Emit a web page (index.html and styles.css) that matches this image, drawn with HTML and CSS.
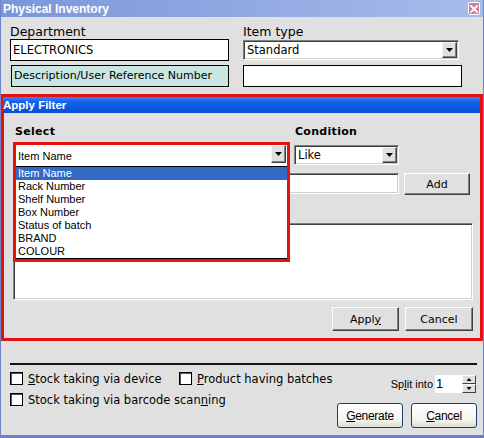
FILE: index.html
```html
<!DOCTYPE html>
<html>
<head>
<meta charset="utf-8">
<title>Physical Inventory</title>
<link rel="stylesheet" href="styles.css">
</head>
<body>
<div class="window">
  <div class="titlebar">
    <span class="title">Physical Inventory</span>
    <span class="close"><svg width="8" height="8" viewBox="0 0 8 8"><path d="M1 1L7 7M7 1L1 7" stroke="#fff" stroke-width="1.8" stroke-linecap="square"/></svg></span>
  </div>

  <div class="top">
    <div class="col">
      <div class="label">Department</div>
      <div class="textbox dept">ELECTRONICS</div>
      <div class="textbox desc">Description/User Reference Number</div>
    </div>
    <div class="col">
      <div class="label">Item type</div>
      <div class="combo sunken itemtype"><span class="val">Standard</span><span class="arrow"></span></div>
      <div class="textbox empty"></div>
    </div>
  </div>

  <div class="filter">
    <div class="ftitle">Apply Filter</div>
    <div class="fbody">
      <div class="fgrid flabels">
        <span class="sel-label">Select</span>
        <span class="cond-label">Condition</span>
      </div>
      <div class="fgrid fcombos">
        <div class="combo-wrap">
          <div class="combo selcombo"><span class="val">Item Name</span><span class="arrow"></span></div>
          <ul class="list">
            <li class="picked">Item Name</li>
            <li>Rack Number</li>
            <li>Shelf Number</li>
            <li>Box Number</li>
            <li>Status of batch</li>
            <li>BRAND</li>
            <li>COLOUR</li>
          </ul>
          <div class="hl"></div>
        </div>
        <div class="combo sunken condcombo"><span class="val">Like</span><span class="arrow"></span></div>
      </div>
      <div class="valrow">
        <div class="valbox"></div>
        <button class="btn add">Add</button>
      </div>
      <div class="textarea"></div>
      <div class="actions">
        <button class="btn apply">Appl<u>y</u></button>
        <button class="btn cancel">Cancel</button>
      </div>
    </div>
  </div>

  <div class="bottom">
    <div class="sep"></div>
    <div class="bgrid">
      <div class="bleft">
        <div class="chkrow">
          <span class="item1"><span class="chk"></span><span><u>S</u>tock taking via device</span></span>
          <span class="chk"></span><span><u>P</u>roduct having batches</span>
        </div>
        <div class="chkrow">
          <span class="chk"></span><span>Stock taking via barcode scan<u>n</u>ing</span>
        </div>
      </div>
      <div class="bright">
        <div class="split">
          <span class="split-label">Sp<u>l</u>it into</span>
          <span class="spinbox">1</span>
          <span class="spin"><span class="up"></span><span class="down"></span></span>
        </div>
        <div class="gbtns">
          <button class="xpbtn"><u>G</u>enerate</button>
          <button class="xpbtn"><u>C</u>ancel</button>
        </div>
      </div>
    </div>
  </div>
</div>
</body>
</html>
```
FILE: styles.css
```css
* { box-sizing: border-box; margin: 0; padding: 0; }
html, body { margin: 0; background: #e0e0e0; }
body { font-family: "DejaVu Sans", Verdana, sans-serif; color: #000; }

.window {
  width: 484px;
  height: 438px;
  background: #e0e0e0;
  border-left: 1px solid #6f87c6;
  border-right: 1px solid #6f87c6;
  border-bottom: 3px solid #6a82c2;
  overflow: hidden;
}

.titlebar {
  height: 17px;
  background: linear-gradient(to right, #7a96da, #a8bceb);
  display: flex;
  align-items: center;
  justify-content: space-between;
  padding: 0 3px 0 2px;
}
.title { font: bold 12px "Liberation Sans", Arial, sans-serif; color: #fff; }
.close {
  width: 12px;
  height: 13px;
  border: 1px solid #fff;
  border-radius: 2px;
  background: #d17d99;
  display: flex;
  align-items: center;
  justify-content: center;
}

.top {
  display: grid;
  grid-template-columns: 219px 219px;
  column-gap: 14px;
  padding-left: 9px;
}
.label { height: 22px; padding-top: 8px; font-size: 12.5px; line-height: 14px; }
.textbox {
  height: 22px;
  border: 1px solid #000;
  background: #fff;
  font-size: 11.5px;
  line-height: 20px;
  padding-left: 2px;
  white-space: nowrap;
  overflow: hidden;
}
.desc { margin-top: 4px; margin-left: 1px; width: 218px; background: #c9e6e2; font-size: 11px; }
.empty { margin-top: 5px; }

.combo { position: relative; display: flex; align-items: center; background: #fff; white-space: nowrap; }
.sunken {
  border: 1px solid;
  border-color: #808080 #ffffff #ffffff #808080;
  box-shadow: inset 1px 1px 0 #404040, inset -1px -1px 0 #d4d0c8;
}
.itemtype { margin-top: 1px; width: 216px; height: 20px; font-size: 11.5px; padding-left: 3px; }
.arrow {
  position: absolute;
  right: 1px;
  top: 1px;
  bottom: 1px;
  width: 15px;
  background: #e0e0e0;
  border: 1px solid;
  border-color: #f4f4f4 #404040 #404040 #f4f4f4;
  box-shadow: inset -1px -1px 0 #808080;
  display: flex;
  align-items: center;
  justify-content: center;
}
.arrow::after {
  content: "";
  width: 7px;
  height: 4px;
  background: #000;
  clip-path: polygon(0 0, 100% 0, 50% 100%);
}

.filter {
  margin-top: 7px;
  height: 247px;
  border: 3px solid #e41212;
}
.ftitle {
  height: 16px;
  background: linear-gradient(#3b84f5, #1462ea 30%, #0b58e3 70%, #0a4ecf);
  color: #fff;
  font: bold 11.5px "Liberation Sans", Arial, sans-serif;
  line-height: 16px;
  margin-left: -1px;
}
.fbody { padding: 0 7px 0 12px; }
.fgrid { display: grid; grid-template-columns: 271px 105px; column-gap: 7px; }
.flabels {
  margin-top: 12px;
  height: 13px;
  font: bold 11px "DejaVu Sans", Verdana, sans-serif;
  line-height: 13px;
  letter-spacing: 0.3px;
}
.sel-label { margin-left: -1px; }
.cond-label { margin-left: 1px; }

.fcombos { margin-top: 7px; height: 21px; }
.combo-wrap { position: relative; height: 21px; }
.selcombo { height: 21px; padding-left: 2px; font: 11px "Liberation Sans", Arial, sans-serif; }
.selcombo .arrow { top: 0; bottom: 3px; right: 1px; }
.list {
  position: absolute;
  left: 0;
  right: 0;
  top: 21px;
  height: 93px;
  background: #fff;
  border-top: 1px solid #000;
  border-bottom: 1px solid #000;
  list-style: none;
  font: 11px "Liberation Sans", Arial, sans-serif;
  z-index: 2;
}
.list li { height: 13px; line-height: 13px; padding-left: 2px; white-space: nowrap; }
.list li.picked { background: #316ac5; color: #fff; }
.hl {
  position: absolute;
  left: -3px;
  right: -3px;
  top: -3px;
  height: 120px;
  border: 3px solid #e41212;
  z-index: 3;
}
.condcombo { height: 20px; font-size: 11.5px; padding-left: 3px; }

.valrow { display: flex; margin-top: 7px; height: 23px; }
.valbox {
  width: 383px;
  height: 21px;
  background: #fff;
  border: 1px solid;
  border-color: #808080 #ffffff #ffffff #808080;
  box-shadow: inset 1px 1px 0 #404040, inset -1px -1px 0 #d4d0c8;
}
.btn {
  background: #e0e0e0;
  border: 1px solid;
  border-color: #ffffff #404040 #404040 #ffffff;
  box-shadow: inset -1px -1px 0 #808080;
  font: 11px "DejaVu Sans", Verdana, sans-serif;
  color: #000;
}
.add { margin-left: 5px; width: 66px; height: 22px; }

.textarea {
  margin-top: 27px;
  margin-left: -3px;
  width: 460px;
  height: 77px;
  background: #fff;
  border: 1px solid;
  border-color: #808080 #ffffff #ffffff #808080;
  box-shadow: inset 1px 1px 0 #404040, inset -1px -1px 0 #d4d0c8;
}
.actions { display: flex; justify-content: flex-end; gap: 6px; margin-top: 7px; }
.apply { width: 67px; height: 24px; }
.cancel { width: 68px; height: 24px; }

u { text-decoration: underline; text-underline-offset: 1px; }

.bottom { padding: 0 6px 0 9px; }
.sep { margin-top: 22px; height: 2px; background: #141414; width: 467px; }
.bgrid { display: flex; justify-content: space-between; }
.bleft { padding-top: 7px; font: 11.5px "DejaVu Sans", Verdana, sans-serif; }
.chkrow { display: flex; align-items: center; height: 13px; white-space: nowrap; }
.chkrow + .chkrow { margin-top: 8px; }
.item1 { display: flex; align-items: center; width: 169px; }
.chk {
  width: 13px;
  height: 13px;
  flex: none;
  background: #fff;
  border: 1px solid #000;
  box-shadow: inset 1px 1px 0 #555;
  margin-right: 5px;
}
.bright { display: flex; flex-direction: column; align-items: flex-end; padding-top: 10px; }
.split { display: flex; align-items: center; height: 18px; margin-right: 1px; }
.split-label {
  font: 11px "Liberation Sans", Arial, sans-serif;
  margin-right: 2px;
}
.spinbox {
  width: 27px;
  height: 18px;
  background: #fff;
  font: 13px "Liberation Sans", Arial, sans-serif;
  line-height: 17px;
  padding-left: 1px;
}
.spin { width: 14px; height: 18px; display: flex; flex-direction: column; }
.spin span {
  flex: 1;
  background: #e0e0e0;
  border: 1px solid;
  border-color: #ffffff #404040 #404040 #ffffff;
  display: flex;
  align-items: center;
  justify-content: center;
}
.spin span::after {
  content: "";
  width: 5px;
  height: 3px;
  background: #000;
}
.spin .up::after { clip-path: polygon(50% 0, 100% 100%, 0 100%); }
.spin .down::after { clip-path: polygon(0 0, 100% 0, 50% 100%); }

.gbtns { display: flex; gap: 8px; margin-top: 10px; }
.xpbtn {
  width: 66px;
  height: 25px;
  border: 1px solid #1c3f73;
  border-radius: 3px;
  background: linear-gradient(#ffffff, #f4f4f0 70%, #dedad2);
  font: 12px "Liberation Sans", Arial, sans-serif;
  letter-spacing: -0.3px;
  color: #000;
}
```
